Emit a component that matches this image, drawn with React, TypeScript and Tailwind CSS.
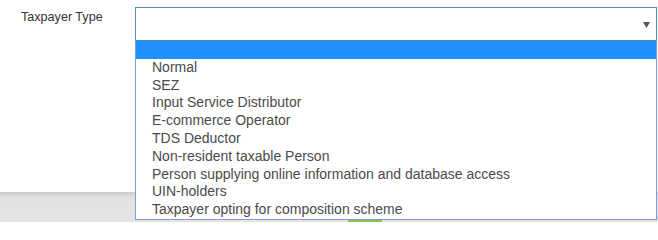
import React from 'react';

const options = [
  '',
  'Normal',
  'SEZ',
  'Input Service Distributor',
  'E-commerce Operator',
  'TDS Deductor',
  'Non-resident taxable Person',
  'Person supplying online information and database access',
  'UIN-holders',
  'Taxpayer opting for composition scheme',
];

export default function App() {
  return (
    <div className="relative w-[658px] h-[222px] overflow-hidden bg-white font-['Liberation_Sans',Arial,sans-serif]">
      <div className="flex flex-col h-full">
        <div className="flex h-[197px] pt-[7px]">
          <label className="w-[135px] pl-[21px] pt-[2px] text-[12.6px] leading-[17px] text-[#333]">
            Taxpayer Type
          </label>
          <div className="flex items-center justify-end w-[522px] h-[34px] border border-[#4d8fb3] bg-white pr-[6px]">
            <svg width="7" height="6" viewBox="0 0 7 6" className="mt-[2px]">
              <polygon points="0,0 7,0 3.5,6" fill="#555" />
            </svg>
          </div>
        </div>
        <div className="flex-1 bg-[linear-gradient(to_bottom,#cbcbcb_0px,#e2e2e2_5px,#e4e4e4_100%)]">
          <div className="ml-[348px] mt-[24px] w-[34px] h-[6px] bg-[#8cc152]" />
        </div>
      </div>

      <ul className="absolute left-[135px] top-[41px] w-[522px] border-x border-b border-[#7f9ddb] bg-white">
        {options.map((o, i) => (
          <li
            key={i}
            className={
              i === 0
                ? 'h-[17.8px] bg-[#1e90ff]'
                : 'h-[17.8px] pl-[16px] text-[14px] leading-[17.8px] text-[#4a4a4a] whitespace-nowrap'
            }
          >
            {o}
          </li>
        ))}
      </ul>
    </div>
  );
}
